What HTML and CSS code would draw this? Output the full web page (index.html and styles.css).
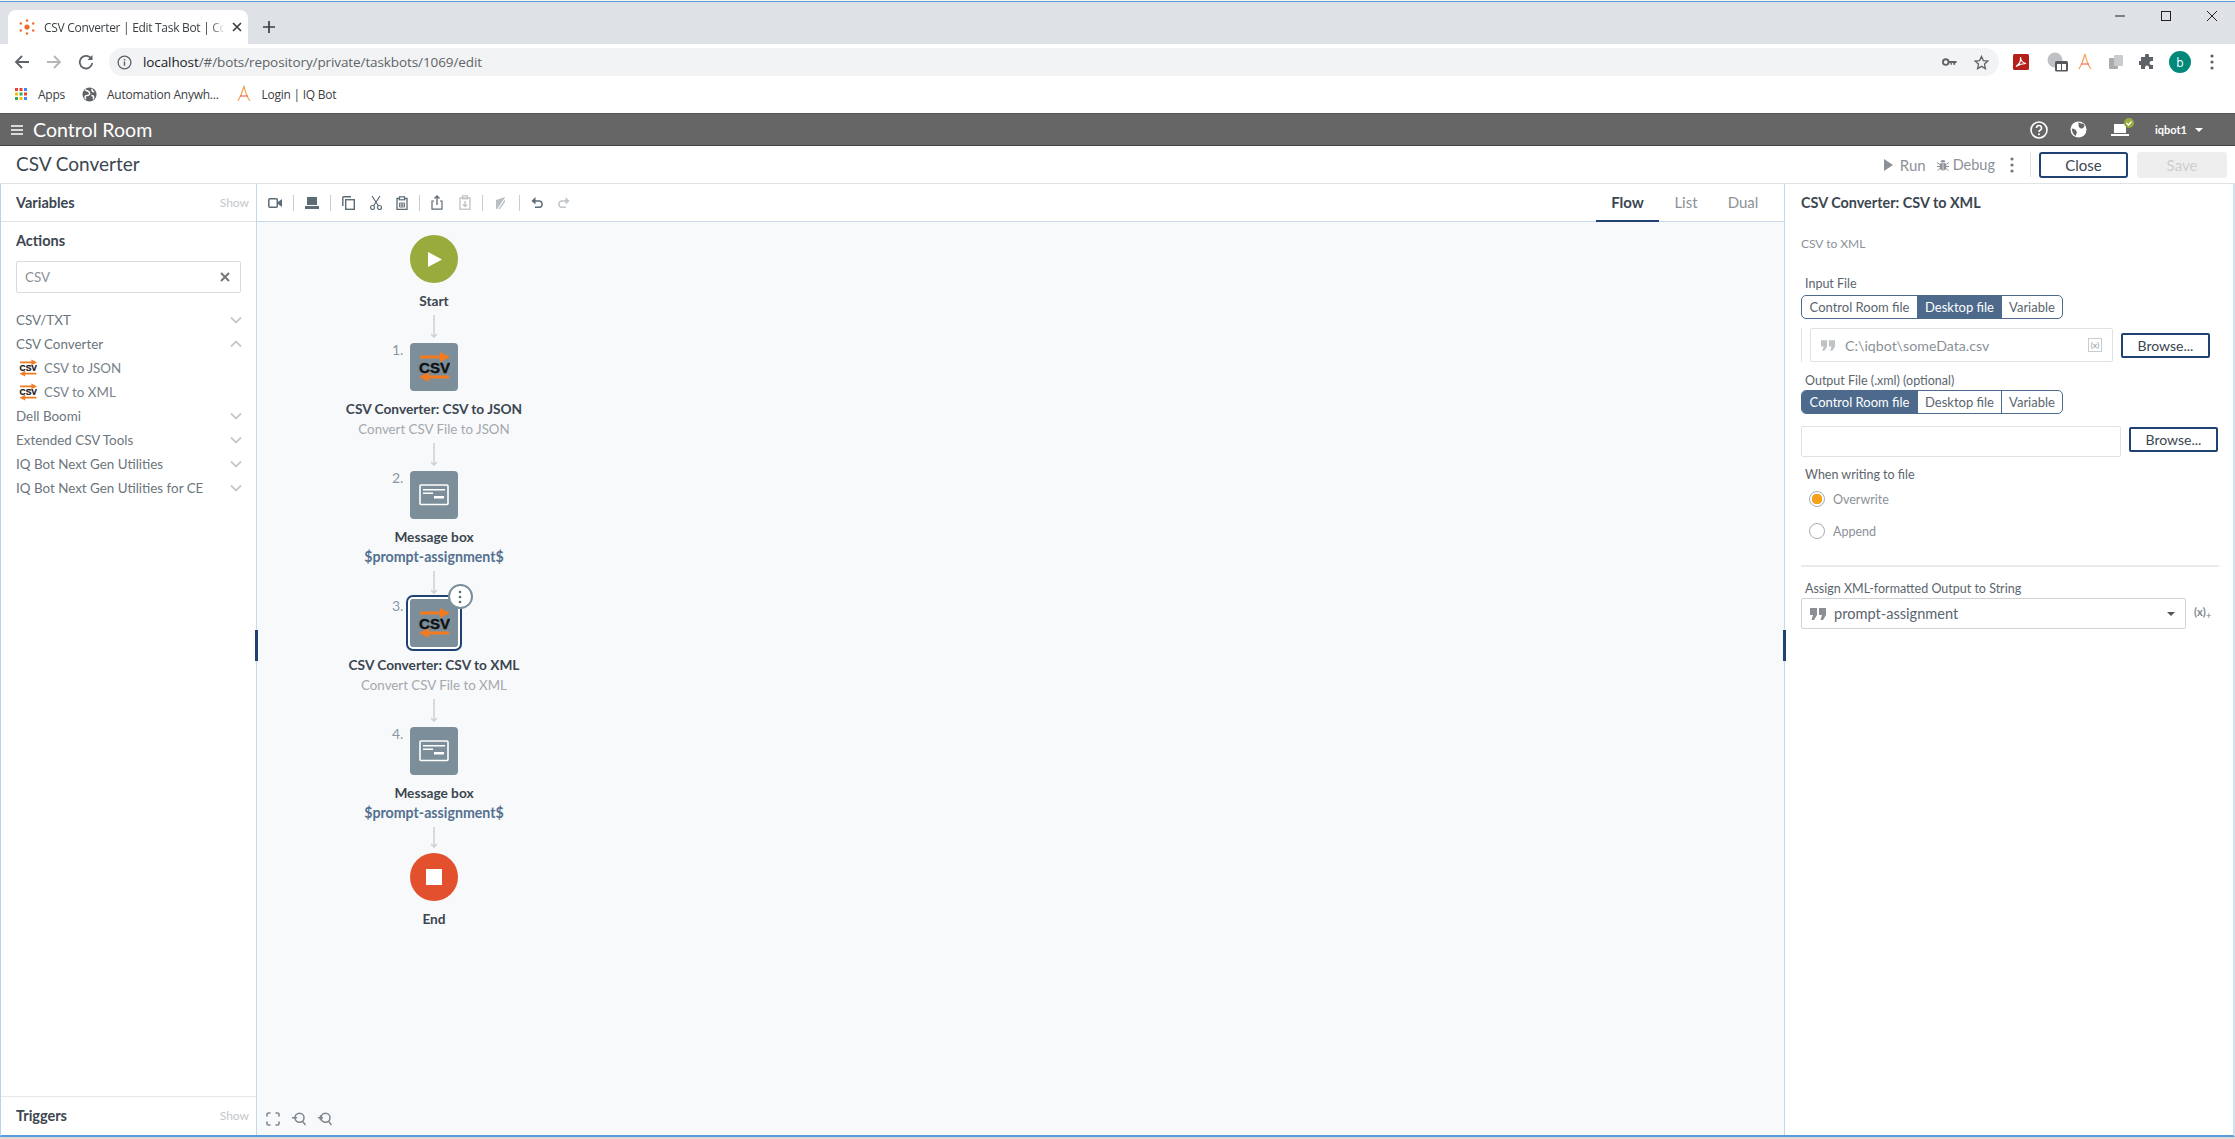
FILE: index.html
```html
<!DOCTYPE html>
<html lang="en">
<head>
<meta charset="utf-8">
<title>CSV Converter | Edit Task Bot</title>
<link rel="stylesheet" href="styles.css">
</head>
<body>
<svg class="defs" width="0" height="0">
  <symbol id="csv" viewBox="0 0 32 32">
    <path d="M2 4.500h20V1l10 5-10 5V7.500H2z" fill="#f47a20"/>
    <path d="M31 24.500H11V21L1 26l10 5v-3.500h20z" fill="#f47a20"/>
    <text x="16.500" y="21.500" text-anchor="middle" font-family="Liberation Sans" font-weight="700" font-size="15" fill="#111" stroke="#111" stroke-width=".4" textLength="31" lengthAdjust="spacingAndGlyphs">CSV</text>
  </symbol>
  <symbol id="msg" viewBox="0 0 30 22">
    <rect x="1" y="1" width="28" height="19.500" rx="1" fill="none" stroke="#fff" stroke-width="1.600"/>
    <path d="M4 5h22v1.500H4zM4 8.500h10V10H4zM15 12h10v2.500H15z" fill="#fff"/>
  </symbol>
  <symbol id="chev" viewBox="0 0 12 8"><path d="M1 1.500l5 5 5-5" fill="none" stroke="#c3c8cc" stroke-width="1.800"/></symbol>
  <symbol id="quote" viewBox="0 0 16 12"><path d="M0 0h7v7l-3 5H1.500l1.500-5H0zM9 0h7v7l-3 5h-2.500l1.500-5H9z" fill="currentColor"/></symbol>
</svg>

<div class="window">
  <div class="tabstrip">
    <div class="tab">
      <svg class="favicon" viewBox="0 0 16 16" width="16" height="16"><circle cx="8" cy="8" r="2.600" fill="#f26a2b"/><g fill="#f26a2b"><circle cx="8" cy="1.500" r="1.200"/><circle cx="8" cy="14.500" r="1.200"/><circle cx="1.800" cy="4.500" r="1.200"/><circle cx="14.200" cy="4.500" r="1.200"/><circle cx="1.800" cy="11.500" r="1.200"/><circle cx="14.200" cy="11.500" r="1.200"/></g></svg>
      <span class="tab-title">CSV Converter | Edit Task Bot | Cc</span>
      <svg viewBox="0 0 10 10" width="10" height="10"><path d="M1 1l8 8M9 1l-8 8" stroke="#3c4043" stroke-width="1.700"/></svg>
    </div>
    <svg class="newtab" viewBox="0 0 12 12" width="12" height="12"><path d="M6 0v12M0 6h12" stroke="#3c4043" stroke-width="1.700"/></svg>
    <div class="winctl">
      <svg viewBox="0 0 12 12" width="12" height="12"><path d="M1 6h10" stroke="#222" stroke-width="1"/></svg>
      <svg viewBox="0 0 12 12" width="12" height="12"><rect x="1.500" y="1.500" width="9" height="9" fill="none" stroke="#222" stroke-width="1"/></svg>
      <svg viewBox="0 0 12 12" width="12" height="12"><path d="M1 1l10 10M11 1L1 11" stroke="#222" stroke-width="1"/></svg>
    </div>
  </div>

  <div class="toolbar">
    <svg class="navbtn" viewBox="0 0 16 16" width="16" height="16"><path d="M15 8H2M8 2L2 8l6 6" fill="none" stroke="#5f6368" stroke-width="1.800"/></svg>
    <svg class="navbtn" viewBox="0 0 16 16" width="16" height="16"><path d="M1 8h13M8 2l6 6-6 6" fill="none" stroke="#b4b6b9" stroke-width="1.800"/></svg>
    <svg class="navbtn" viewBox="0 0 16 16" width="16" height="16"><path d="M13.500 5A6.300 6.300 0 1 0 14.300 9" fill="none" stroke="#5f6368" stroke-width="1.800"/><path d="M14.500 1v5h-5z" fill="#5f6368"/></svg>
    <div class="omnibox">
      <svg viewBox="0 0 16 16" width="15" height="15"><circle cx="8" cy="8" r="6.800" fill="none" stroke="#5f6368" stroke-width="1.400"/><path d="M8 7v4.500M8 4.300v1.500" stroke="#5f6368" stroke-width="1.500"/></svg>
      <span class="url"><b>localhost</b>/#/bots/repository/private/taskbots/1069/edit</span>
      <svg class="key" viewBox="0 0 16 10" width="15" height="10"><circle cx="4" cy="5" r="3" fill="none" stroke="#5f6368" stroke-width="2"/><path d="M7 4h8.500v2H14v2h-2V6h-1.500v2H9V6H7z" fill="#5f6368"/></svg>
      <svg class="star" viewBox="0 0 16 16" width="15" height="15"><path d="M8 1.500l2 4.500 4.800.5-3.600 3.200 1 4.800L8 12.100 3.800 14.500l1-4.800L1.200 6.500 6 6z" fill="none" stroke="#5f6368" stroke-width="1.400"/></svg>
    </div>
    <div class="ext">
      <svg viewBox="0 0 16 16" width="16" height="16"><rect width="16" height="16" rx="1.500" fill="#b4201a"/><path d="M3 12.500c3-2 5-6 4.500-9.500 0 3 2 6 5.500 6.500-4 0-7 1-10 3z" fill="none" stroke="#fff" stroke-width="1.200"/></svg>
      <svg class="ext-2" viewBox="0 0 22 20" width="22" height="20"><circle cx="8" cy="8" r="7.500" fill="#bfc2c5"/><rect x="8" y="9" width="13" height="10.500" rx="1.500" fill="#55595d"/><path d="M10 12h9v6h-9z" fill="#fff"/><path d="M14.500 12v6" stroke="#55595d"/></svg>
      <svg class="ext-a" viewBox="0 0 16 18" width="16" height="18"><path d="M2 16C5 11 7 5 8 1c1 4 2 10 6 15" fill="none" stroke="#f3a45a" stroke-width="1.200"/><path d="M4 11h8" stroke="#f06a5a" stroke-width="1.200"/></svg>
      <svg viewBox="0 0 16 16" width="16" height="16"><rect x="1" y="4" width="9" height="11" rx="1" fill="#a9acae"/><rect x="6" y="1" width="9" height="11" rx="1" fill="#c9cbcd"/></svg>
      <svg viewBox="0 0 16 16" width="16" height="16"><path d="M6 1.500a2 2 0 0 1 4 0V3h4v4h-1.500a2 2 0 0 0 0 4H14v4h-4v-1.500a2 2 0 0 0-4 0V15H2v-4H.5a2 2 0 0 1 0-4H2V3h4z" fill="#5f6368"/></svg>
      <span class="avatar">b</span>
      <svg class="ext-dots" viewBox="0 0 4 16" width="4" height="16"><g fill="#5f6368"><circle cx="2" cy="2" r="1.600"/><circle cx="2" cy="8" r="1.600"/><circle cx="2" cy="14" r="1.600"/></g></svg>
    </div>
  </div>

  <div class="bookmarks">
    <svg class="bm-icon" viewBox="0 0 12 12" width="12" height="12"><g fill="#ea4335"><rect width="3" height="3"/><rect x="4.500" width="3" height="3"/></g><rect x="9" width="3" height="3" fill="#4285f4"/><rect y="4.500" width="3" height="3" fill="#fbbc05"/><rect x="4.500" y="4.500" width="3" height="3" fill="#34a853"/><rect x="9" y="4.500" width="3" height="3" fill="#ea4335"/><rect y="9" width="3" height="3" fill="#34a853"/><rect x="4.500" y="9" width="3" height="3" fill="#fbbc05"/><rect x="9" y="9" width="3" height="3" fill="#4285f4"/></svg>
    <span class="bm-text bm-apps">Apps</span>
    <svg class="bm-icon" viewBox="0 0 16 16" width="15" height="15"><circle cx="8" cy="8" r="7.500" fill="#5f6368"/><path d="M3 3c2 1 4 1 5 3s-1 3-3 3-2 2-1 4M11 2c-1 2 0 3 2 3M10 9c2 0 3 1 2 4" fill="none" stroke="#fff" stroke-width="1.600"/></svg>
    <span class="bm-text bm-auto">Automation Anywh...</span>
    <svg class="bm-icon" viewBox="0 0 16 18" width="16" height="18"><path d="M2 16C5 11 7 5 8 1c1 4 2 10 6 15" fill="none" stroke="#f3a45a" stroke-width="1.200"/><path d="M4 11h8" stroke="#f06a5a" stroke-width="1.200"/></svg>
    <span class="bm-text">Login | IQ Bot</span>
  </div>

  <header class="appnav">
    <svg class="burger" viewBox="0 0 12 10" width="12" height="10"><path d="M0 1h12M0 5h12M0 9h12" stroke="#fff" stroke-width="1.700"/></svg>
    <span class="brand">Control Room</span>
    <div class="appnav-right">
      <svg viewBox="0 0 18 18" width="18" height="18"><circle cx="9" cy="9" r="8" fill="none" stroke="#fff" stroke-width="1.600"/><path d="M6.500 7a2.500 2.500 0 1 1 3.500 2.300c-.8.4-1 .8-1 1.700" fill="none" stroke="#fff" stroke-width="1.600"/><circle cx="9" cy="13.300" r="1" fill="#fff"/></svg>
      <svg class="nav-globe" viewBox="0 0 18 18" width="17" height="17"><circle cx="9" cy="9" r="8.500" fill="#fff"/><path d="M9 1c1 2 5 1 6 3s-1 4-3 4-3-2-3-4zM2 8c2 0 4 1 5 3s-1 3-1 5c-2-1-4-4-4-8z" fill="#666"/></svg>
      <span class="nav-bot">
        <svg viewBox="0 0 18 14" width="18" height="14"><path d="M3 1h12v9H3zM0 11h18v2H0z" fill="#fff"/></svg>
        <svg class="nav-check" viewBox="0 0 10 10" width="10" height="10"><circle cx="5" cy="5" r="5" fill="#9aab3e"/><path d="M2.500 5l2 2 3-3.500" fill="none" stroke="#fff" stroke-width="1.200"/></svg>
      </span>
      <span class="nav-user">iqbot1</span>
      <svg viewBox="0 0 8 4" width="8" height="4"><path d="M0 0h8L4 4z" fill="#fff"/></svg>
    </div>
  </header>

  <div class="titlebar">
    <h1 class="bot-title">CSV Converter</h1>
    <div class="title-actions">
      <svg viewBox="0 0 9 12" width="9" height="12"><path d="M0 0l9 6-9 6z" fill="#8b9197"/></svg>
      <span class="act-run">Run</span>
      <svg class="ic-debug" viewBox="0 0 12 12" width="12" height="12"><ellipse cx="6" cy="7.500" rx="3.300" ry="4" fill="#8b9197"/><path d="M3.500 3a2.500 2 0 0 1 5 0z" fill="#8b9197"/><path d="M0 3.500l3 2M12 3.500l-3 2M0 7.500h3M9 7.500h3M.5 11.500L3 9.500M11.500 11.500L9 9.500" stroke="#8b9197"/><path d="M6 4v7.500" stroke="#fff" stroke-width=".7"/></svg>
      <span class="act-debug">Debug</span>
      <svg class="ic-more" viewBox="0 0 4 16" width="4" height="16"><g fill="#777"><circle cx="2" cy="2" r="1.600"/><circle cx="2" cy="8" r="1.600"/><circle cx="2" cy="14" r="1.600"/></g></svg>
      <span class="vsep"></span>
      <button class="btn btn-close">Close</button>
      <button class="btn btn-save">Save</button>
    </div>
  </div>

  <main class="workspace">
    <aside class="leftpanel">
      <div class="panel-head vars"><strong>Variables</strong><span class="show">Show</span></div>
      <div class="actions">
        <strong class="actions-title">Actions</strong>
        <div class="search"><span>CSV</span><svg viewBox="0 0 10 10" width="10" height="10"><path d="M1 1l8 8M9 1l-8 8" stroke="#777" stroke-width="2"/></svg></div>
        <ul class="tree">
          <li class="row"><span>CSV/TXT</span><svg class="chev" width="12" height="8"><use href="#chev"/></svg></li>
          <li class="row"><span>CSV Converter</span><svg class="chev up" width="12" height="8"><use href="#chev"/></svg></li>
          <li class="row sub"><svg class="sub-ic" width="18" height="18"><use href="#csv"/></svg><span>CSV to JSON</span></li>
          <li class="row sub"><svg class="sub-ic" width="18" height="18"><use href="#csv"/></svg><span>CSV to XML</span></li>
          <li class="row"><span>Dell Boomi</span><svg class="chev" width="12" height="8"><use href="#chev"/></svg></li>
          <li class="row"><span>Extended CSV Tools</span><svg class="chev" width="12" height="8"><use href="#chev"/></svg></li>
          <li class="row"><span>IQ Bot Next Gen Utilities</span><svg class="chev" width="12" height="8"><use href="#chev"/></svg></li>
          <li class="row"><span>IQ Bot Next Gen Utilities for CE</span><svg class="chev" width="12" height="8"><use href="#chev"/></svg></li>
        </ul>
      </div>
      <div class="panel-head trig"><strong>Triggers</strong><span class="show">Show</span></div>
    </aside>

    <section class="center">
      <div class="center-head">
        <div class="tools">
          <svg viewBox="0 0 14 10" width="14" height="10"><rect x=".8" y=".8" width="8.500" height="8.400" rx="1" fill="none" stroke="#5d6b75" stroke-width="1.500"/><path d="M10 4l4-3v8l-4-3z" fill="#5d6b75"/></svg>
          <i class="tsep"></i>
          <svg viewBox="0 0 14 12" width="14" height="12"><path d="M2 0h10v8H2zM0 9h14v3H0z" fill="#5d6b75"/></svg>
          <i class="tsep"></i>
          <svg viewBox="0 0 13 14" width="13" height="14"><path d="M9 .8H1.500a.7.7 0 0 0-.7.700V10" fill="none" stroke="#5d6b75" stroke-width="1.400"/><rect x="3.700" y="3.700" width="8.600" height="9.600" fill="none" stroke="#5d6b75" stroke-width="1.400"/></svg>
          <svg class="t-m4" viewBox="0 0 12 14" width="12" height="14"><circle cx="2.500" cy="11.500" r="2" fill="none" stroke="#5d6b75" stroke-width="1.200"/><circle cx="9.500" cy="11.500" r="2" fill="none" stroke="#5d6b75" stroke-width="1.200"/><path d="M3.500 10L10 0M8.500 10L2 0" stroke="#5d6b75" stroke-width="1.200"/></svg>
          <svg class="t-m3" viewBox="0 0 12 14" width="12" height="14"><path d="M3 2.500H1v11h10v-11H9" fill="none" stroke="#5d6b75" stroke-width="1.300"/><rect x="3.500" y=".8" width="5" height="3" fill="none" stroke="#5d6b75" stroke-width="1.200"/><path d="M3.500 7h5v4h-5zM6 7v4M3.500 9h5" fill="none" stroke="#5d6b75" stroke-width=".9"/></svg>
          <i class="tsep"></i>
          <svg viewBox="0 0 12 15" width="12" height="15"><path d="M3 6H1v8.200h10V6H9" fill="none" stroke="#5d6b75" stroke-width="1.200"/><path d="M6 10V1M3.500 3.500L6 1l2.500 2.500" fill="none" stroke="#5d6b75" stroke-width="1.300"/></svg>
          <svg class="t-m5" viewBox="0 0 12 15" width="12" height="15"><rect x="1" y="3" width="10" height="11.200" fill="none" stroke="#b9bec2" stroke-width="1.200"/><rect x="3.500" y=".8" width="5" height="3" fill="none" stroke="#b9bec2" stroke-width="1.100"/><path d="M6 6v5.500M4 9.500l2 2 2-2" fill="none" stroke="#b9bec2" stroke-width="1.200"/></svg>
          <i class="tsep"></i>
          <svg class="t-m1" viewBox="0 0 12 14" width="12" height="14"><path d="M1 10V4l6-2 3-1v5l-5 7H1z" fill="#b9bec2"/><path d="M11 1L2 14" stroke="#fff" stroke-width="1.200"/></svg>
          <i class="tsep t-m1"></i>
          <svg viewBox="0 0 13 11" width="13" height="11"><path d="M3.500 4h5a3.200 3.200 0 0 1 0 6.300H4" fill="none" stroke="#5d6b75" stroke-width="1.400"/><path d="M4.500 0L.5 4l4 3.500z" fill="#5d6b75"/></svg>
          <svg class="t-m2" viewBox="0 0 13 11" width="13" height="11"><path d="M9.500 4h-5a3.200 3.200 0 0 0 0 6.300H9" fill="none" stroke="#c0c5c9" stroke-width="1.400"/><path d="M8.500 0l4 4-4 3.500z" fill="#c0c5c9"/></svg>
        </div>
        <nav class="viewtabs">
          <span class="vt active">Flow</span>
          <span class="vt vt-list">List</span>
          <span class="vt vt-dual">Dual</span>
        </nav>
      </div>

      <div class="canvas">
        <span class="handle handle-l"></span>
        <div class="flow">
          <div class="node">
            <div class="circle start"><svg viewBox="0 0 16 16" width="15" height="15"><path d="M0 0l15 8-15 8z" fill="#fff"/></svg></div>
            <div class="lbl">Start</div>
          </div>
          <svg class="arrow" width="10" height="24"><path d="M5 0v22M2 19l3 3 3-3" fill="none" stroke="#d0d3d6" stroke-width="1.600"/></svg>
          <div class="node">
            <div class="icon"><span class="num">1.</span><svg width="32" height="32"><use href="#csv"/></svg></div>
            <div class="lbl">CSV Converter: CSV to JSON</div>
            <div class="desc">Convert CSV File to JSON</div>
          </div>
          <svg class="arrow" width="10" height="24"><path d="M5 0v22M2 19l3 3 3-3" fill="none" stroke="#d0d3d6" stroke-width="1.600"/></svg>
          <div class="node">
            <div class="icon"><span class="num">2.</span><svg width="30" height="22"><use href="#msg"/></svg></div>
            <div class="lbl">Message box</div>
            <div class="var">$prompt-assignment$</div>
          </div>
          <svg class="arrow" width="10" height="24"><path d="M5 0v22M2 19l3 3 3-3" fill="none" stroke="#d0d3d6" stroke-width="1.600"/></svg>
          <div class="node">
            <div class="icon selected"><span class="num">3.</span><svg width="32" height="32"><use href="#csv"/></svg>
              <span class="more"><svg viewBox="0 0 4 14" width="4" height="14"><g fill="#5d6b75"><circle cx="2" cy="2" r="1.300"/><circle cx="2" cy="7" r="1.300"/><circle cx="2" cy="12" r="1.300"/></g></svg></span>
            </div>
            <div class="lbl">CSV Converter: CSV to XML</div>
            <div class="desc">Convert CSV File to XML</div>
          </div>
          <svg class="arrow" width="10" height="24"><path d="M5 0v22M2 19l3 3 3-3" fill="none" stroke="#d0d3d6" stroke-width="1.600"/></svg>
          <div class="node">
            <div class="icon"><span class="num">4.</span><svg width="30" height="22"><use href="#msg"/></svg></div>
            <div class="lbl">Message box</div>
            <div class="var">$prompt-assignment$</div>
          </div>
          <svg class="arrow" width="10" height="22"><path d="M5 0v20M2 17l3 3 3-3" fill="none" stroke="#d0d3d6" stroke-width="1.600"/></svg>
          <div class="node">
            <div class="circle end"><span class="square"></span></div>
            <div class="lbl">End</div>
          </div>
        </div>
        <div class="zoomtools">
          <svg viewBox="0 0 14 14" width="14" height="14"><path d="M1 4.500V2.500A1.500 1.500 0 0 1 2.500 1h2M9.500 1h2A1.500 1.500 0 0 1 13 2.500v2M13 9.500v2a1.500 1.500 0 0 1-1.500 1.500h-2M4.500 13h-2A1.500 1.500 0 0 1 1 11.500v-2" fill="none" stroke="#7d868d" stroke-width="1.600"/></svg>
          <svg viewBox="0 0 14 14" width="14" height="14"><circle cx="7.500" cy="5.800" r="4.500" fill="none" stroke="#7d868d" stroke-width="1.500"/><path d="M10.500 9.300L13.500 13M0 5.800h5" stroke="#7d868d" stroke-width="1.500"/></svg>
          <svg viewBox="0 0 14 14" width="14" height="14"><circle cx="7.500" cy="5.800" r="4.500" fill="none" stroke="#7d868d" stroke-width="1.500"/><path d="M10.500 9.300L13.500 13M0 5.800h5M2.500 3.300v5" stroke="#7d868d" stroke-width="1.500"/></svg>
        </div>
      </div>
    </section>

    <aside class="rightpanel">
      <span class="handle handle-r"></span>
      <h2 class="rp-title">CSV Converter: CSV to XML</h2>
      <p class="rp-sub">CSV to XML</p>

      <label class="field-label m-input">Input File</label>
      <div class="seg m-seg1"><span class="s1">Control Room file</span><span class="s2 on">Desktop file</span><span class="s3">Variable</span></div>
      <div class="file-row first">
        <div class="input w-a">
          <svg class="q" width="14" height="11"><use href="#quote"/></svg>
          <span class="val">C:\iqbot\someData.csv</span>
          <span class="xbox">(x)</span>
        </div>
        <button class="btn browse">Browse...</button>
      </div>

      <label class="field-label m-output">Output File (.xml) (optional)</label>
      <div class="seg m-seg2"><span class="s1 on">Control Room file</span><span class="s2">Desktop file</span><span class="s3">Variable</span></div>
      <div class="file-row second">
        <div class="input w-b"></div>
        <button class="btn browse browse-top">Browse...</button>
      </div>

      <label class="field-label m-write">When writing to file</label>
      <div class="radios">
        <div class="radio-row"><span class="radio checked"></span>Overwrite</div>
        <div class="radio-row"><span class="radio"></span>Append</div>
      </div>
      <hr class="divider">
      <label class="field-label m-assign">Assign XML-formatted Output to String</label>
      <div class="assign">
        <div class="select">
          <svg class="q2" width="16" height="12"><use href="#quote"/></svg>
          <span class="sel-val">prompt-assignment</span>
          <svg class="caret" viewBox="0 0 8 4" width="8" height="4"><path d="M0 0h8L4 4z" fill="#555"/></svg>
        </div>
        <span class="xplus">(x)<sub>+</sub></span>
      </div>
    </aside>
  </main>
  <div class="underlap"></div>
</div>
</body>
</html>
```

FILE: styles.css
```css
* { box-sizing: border-box; }
html, body { margin: 0; padding: 0; height: 100%; background: #fff; overflow: hidden; }
body { font-family: Lato, "Open Sans", sans-serif; color: #3b4650; }
.defs { display: none; }
svg { display: block; flex: none; }

.window { height: 1139px; display: flex; flex-direction: column; border-top: 1px solid #f4f4f4; }

/* browser chrome */
.tabstrip { height: 43px; flex: none; background: #dee1e6; border-top: 1px solid #5c9bd8; display: flex; align-items: flex-end; padding-left: 8px; font-family: "Open Sans", sans-serif; }
.tab { width: 240px; height: 34px; background: #fff; border-radius: 8px 8px 0 0; display: flex; align-items: center; padding: 0 11px 0 11px; }
.favicon { margin-right: 9px; }
.tab-title { flex: 1; font-size: 12px; color: #3c4043; white-space: nowrap; margin-right: 7px; letter-spacing: -.3px; -webkit-mask-image: linear-gradient(90deg, #000 92%, transparent); mask-image: linear-gradient(90deg, #000 92%, transparent); }
.newtab { margin: 0 0 11px 15px; }
.winctl { margin-left: auto; align-self: flex-start; display: flex; gap: 34px; padding: 8px 17px 0 0; }

.toolbar { height: 33px; flex: none; background: #fff; display: flex; align-items: center; padding: 3px 0 0 14px; gap: 16px; }
.omnibox { width: 1890px; height: 28px; background: #f1f3f4; border-radius: 14px; display: flex; align-items: center; padding: 0 10px 0 8px; margin-left: -1px; }
.url { font-family: "Open Sans", sans-serif; font-size: 13.500px; color: #5f6368; margin-left: 11px; letter-spacing: -.1px; }
.url b { font-weight: 400; color: #202124; }
.key { margin-left: auto; }
.star { margin-left: 17px; }
.ext { display: flex; align-items: center; gap: 15px; margin-left: -2px; }
.ext-2 { margin-left: 3px; }
.ext-a { margin-left: -7px; }
.ext-dots { margin-left: 4px; }
.avatar { width: 22px; height: 22px; border-radius: 50%; background: #00897b; color: #fff; font: 12px "Open Sans", sans-serif; display: flex; align-items: center; justify-content: center; margin-left: -1px; }

.bookmarks { height: 36px; flex: none; background: #fff; display: flex; align-items: center; padding: 0 0 2px 15px; font-family: "Open Sans", sans-serif; }
.bm-text { font-size: 12px; color: #3c4043; margin-left: 10px; letter-spacing: -.25px; }
.bm-apps { margin-left: 11px; margin-right: 17px; }
.bm-auto { margin-right: 17px; }

.appnav { height: 33px; flex: none; background: #666; border-top: 1px solid #555; border-bottom: 1px solid #444; display: flex; align-items: center; padding-left: 11px; color: #fff; }
.brand { font-size: 19.600px; font-weight: 400; margin: 0 0 1px 10px; }
.appnav-right { margin-left: auto; display: flex; align-items: center; padding-right: 32px; }
.nav-globe { margin-left: 22px; }
.nav-bot { position: relative; margin-left: 24px; }
.nav-check { position: absolute; right: -5px; top: -5px; }
.nav-user { font-size: 11px; font-weight: 700; margin: 0 8px 0 26px; }

.titlebar { height: 38px; flex: none; background: #fff; border-bottom: 1px solid #dfe3e7; display: flex; align-items: center; padding: 0 8px 0 16px; }
.bot-title { margin: 0 0 2px; font-size: 19px; font-weight: 400; color: #3b4650; }
.title-actions { margin-left: auto; display: flex; align-items: center; font-size: 15px; color: #8b9197; }
.act-run { margin-left: 7px; }
.ic-debug { margin-left: 11px; }
.act-debug { margin-left: 4px; font-size: 14.500px; }
.ic-more { margin-left: 15px; }
.vsep { width: 1px; height: 25px; background: #dfe3e7; margin: 0 8px 0 16px; }
.btn { font-family: inherit; background: #fff; padding: 0; cursor: default; }
.btn-close { width: 89px; height: 26px; border: 2px solid #1f4272; border-radius: 3px; font-size: 15px; color: #3b4650; }
.btn-save { width: 90px; height: 26px; border: 0; background: #eeeeee; border-radius: 3px; font-size: 15px; color: #cfcfcf; margin-left: 9px; }

/* workspace */
.workspace { flex: 1; min-height: 0; display: flex; border-left: 1px solid #b8d3ec; border-right: 2px solid #cfe0f0; border-bottom: 2px solid #5b9bd5; }
.leftpanel { width: 256px; flex: none; display: flex; flex-direction: column; border-right: 1px solid #c6d9ea; background: #fff; }
.panel-head { display: flex; align-items: center; justify-content: space-between; padding: 0 7px 0 15px; height: 38px; flex: none; font-size: 14.500px; color: #3b4650; }
.panel-head strong { font-weight: 700; }
.vars { border-bottom: 1px solid #dfe3e7; }
.trig { border-top: 1px solid #e6e8ea; height: 39px; padding-bottom: 2px; }
.show { font-size: 12px; color: #c3c7ca; }
.actions { flex: 1; padding: 9px 15px 0; }
.actions-title { display: block; font-size: 14.500px; line-height: 20px; }
.search { margin-top: 10px; height: 32px; border: 1px solid #d8dbde; border-radius: 2px; display: flex; align-items: center; justify-content: space-between; padding: 0 10px 0 8px; font-size: 13.400px; color: #8b9197; }
.tree { list-style: none; margin: 15px 0 0; padding: 0; }
.row { height: 24px; display: flex; align-items: center; justify-content: space-between; font-size: 13.400px; color: #6c757c; }
.chev { margin-right: -1px; }
.chev.up { transform: rotate(180deg); }
.sub { justify-content: flex-start; padding-left: 3px; }
.sub-ic { margin-right: 7px; }
.sub span { color: #79828a; }

.center { flex: 1; min-width: 0; display: flex; flex-direction: column; }
.center-head { height: 38px; flex: none; border-bottom: 1px solid #c8d9ea; display: flex; align-items: center; justify-content: space-between; padding-left: 11px; }
.tools { display: flex; align-items: center; gap: 11px; }
.t-m1 { margin-left: 1px; }
.t-m2 { margin-left: 2px; }
.t-m3 { margin-left: 3px; }
.t-m4 { margin-left: 4px; }
.t-m5 { margin-left: 5px; }
.tsep { width: 1px; height: 16px; background: #c9cdd0; }
.viewtabs { display: flex; height: 100%; margin-right: 11px; }
.vt { width: 63px; display: flex; align-items: center; justify-content: center; font-size: 15px; color: #8b9197; border-bottom: 2px solid transparent; margin-bottom: -1px; padding-bottom: 1px; }
.vt-list { width: 54px; }
.vt-dual { width: 60px; }
.vt.active { color: #3b4650; font-weight: 700; border-bottom-color: #1f4272; }

.canvas { flex: 1; position: relative; background: #f8f9fb; padding: 13px 0 0 27px; }
.flow { width: 300px; display: flex; flex-direction: column; align-items: center; }
.node { display: flex; flex-direction: column; align-items: center; }
.circle { width: 48px; height: 48px; border-radius: 50%; display: flex; align-items: center; justify-content: center; }
.start { background: #9aab3e; padding-left: 3px; }
.end { background: #e2502e; }
.square { width: 16px; height: 16px; background: #fff; }
.icon { position: relative; width: 48px; height: 48px; border-radius: 4px; background: #7b8e99; display: flex; align-items: center; justify-content: center; }
.selected { box-shadow: 0 0 0 2px #fff, 0 0 0 4px #1f4272; border-radius: 3px; }
.num { position: absolute; left: -18px; top: -1px; font-size: 14px; line-height: 16px; color: #8b97a3; }
.more { position: absolute; right: -15px; top: -15px; width: 25px; height: 25px; border-radius: 50%; background: #fff; border: 2px solid #7b8e99; display: flex; align-items: center; justify-content: center; }
.lbl { margin-top: 8px; font-size: 13.700px; line-height: 20px; font-weight: 700; color: #3b4650; white-space: nowrap; }
.desc { font-size: 13.300px; line-height: 20px; color: #a3a8ad; white-space: nowrap; }
.var { font-size: 14.200px; line-height: 20px; font-weight: 700; color: #54708f; white-space: nowrap; }
.arrow { margin: 4px 0; }
.handle { position: absolute; width: 3px; height: 31px; background: #1f4272; }
.handle-l { left: -2px; top: 408px; }
.handle-r { left: -2px; top: 446px; }
.zoomtools { position: absolute; left: 9px; bottom: 9px; display: flex; gap: 12px; }

/* properties */
.rightpanel { position: relative; width: 449px; flex: none; border-left: 1px solid #c6d9ea; padding: 9px 0 0 16px; background: #fff; }
.rp-title { margin: 0; font-size: 14.400px; line-height: 20px; font-weight: 700; color: #3b4650; }
.rp-sub { margin: 23px 0 0; font-size: 12px; line-height: 16px; color: #8b9197; }
.field-label { display: block; padding-left: 4px; font-size: 12.500px; line-height: 16px; color: #5b656e; }
.m-input { margin-top: 24px; }
.m-output { margin-top: 11px; }
.m-write { margin-top: 10px; }
.m-assign { margin-top: 14px; }
.seg { width: 262px; height: 24px; display: flex; border: 1px solid #4d6a8c; border-radius: 5px; font-size: 13px; color: #5b656e; }
.m-seg1 { margin-top: 3px; }
.m-seg2 { margin-top: 1px; }
.seg span { display: flex; align-items: center; justify-content: center; white-space: nowrap; }
.seg .s1 { width: 115px; }
.seg .s2 { width: 84px; border-left: 1px solid #4d6a8c; }
.seg .s3 { flex: 1; border-left: 1px solid #4d6a8c; }
.seg .on { background: #4d6a8c; color: #fff; }
.seg .s1.on { border-radius: 4px 0 0 4px; }
.file-row { display: flex; align-items: center; }
.first { margin-top: 9px; height: 34px; border-left: 1px solid #dfe1e3; padding-left: 8px; }
.second { margin-top: 12px; height: 31px; }
.input { height: 100%; border: 1px solid #dfe1e3; border-radius: 2px; display: flex; align-items: center; color: #c0c3c6; }
.w-a { width: 303px; padding: 0 10px; }
.w-b { width: 320px; }
.q { color: #c0c3c6; }
.val { margin-left: 10px; font-size: 14.200px; color: #8b9197; }
.xbox { margin-left: auto; width: 14px; height: 14px; border: 1px solid #c9cccf; font-size: 8px; color: #8b9197; display: flex; align-items: center; justify-content: center; }
.browse { width: 89px; height: 25px; border: 2px solid #1f4272; border-radius: 2px; font-size: 14px; color: #3b4650; margin-left: 8px; }
.browse-top { align-self: flex-start; margin-top: 1px; }
.radios { padding-left: 8px; }
.radio-row { height: 32px; display: flex; align-items: center; gap: 8px; font-size: 12.500px; color: #8b9197; }
.radio { width: 16px; height: 16px; border-radius: 50%; border: 1px solid #a8acaf; background: #fff; }
.radio.checked { background: radial-gradient(circle, #f7a11a 0 5px, #fff 5.500px); }
.divider { width: 418px; height: 2px; margin: 18px 0 0; border: 0; background: #ebebeb; }
.assign { margin-top: 1px; display: flex; align-items: center; }
.select { width: 385px; height: 31px; border: 1px solid #d0d3d6; border-radius: 2px; display: flex; align-items: center; padding: 0 10px 0 8px; color: #8b8f93; }
.sel-val { margin-left: 8px; font-size: 14.600px; color: #5b656e; }
.caret { margin-left: auto; }
.xplus { margin-left: 8px; font-size: 11px; font-weight: 700; color: #7d868d; }
.xplus sub { font-weight: 400; font-size: 10px; }
.underlap { height: 2px; flex: none; background: #d9d9d9; }
```
